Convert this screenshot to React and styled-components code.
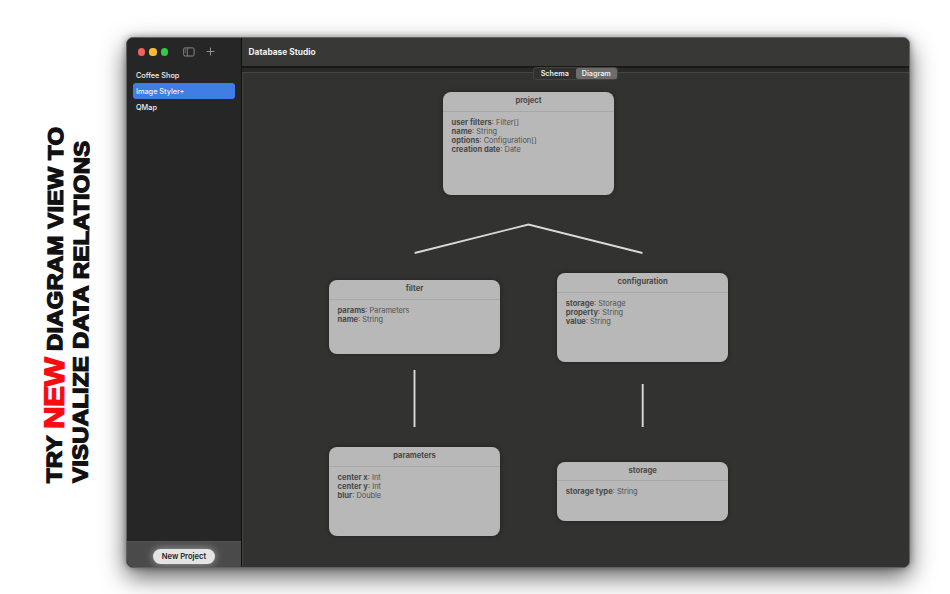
import React from "react";
import styled, { createGlobalStyle } from "styled-components";

const Global = createGlobalStyle`
  * { box-sizing: border-box; }
  body { margin: 0; background: #fff; overflow: hidden; }
`;

const Page = styled.main`
  display: flex;
  width: 950px;
  height: 594px;
  background: #fff;
  font-family: Inter, "Liberation Sans", sans-serif;
`;

const Banner = styled.div`
  flex: none;
  width: 126px;
  height: 483px;
  padding-left: 43.7px;
  display: flex;
  color: #111;
`;

const Slogan = styled.h1`
  flex: none;
  margin: 0;
  width: 52px;
  height: 483px;
  display: flex;
  flex-direction: row-reverse;
  transform-origin: 50% 100%;
  transform: translateY(-541px) rotate(180.27deg) scaleY(1.12);
`;

const Line = styled.div`
  flex: none;
  writing-mode: vertical-rl;
  width: 26px;
  height: 483px;
  line-height: 26px;
  font-family: "Liberation Sans", Arial, sans-serif;
  font-size: 21.3px;
  font-weight: 700;
  white-space: pre;
  -webkit-text-stroke: 1.3px currentColor;
  letter-spacing: ${(p) => p.$spacing}px;
`;

const Highlight = styled.span`
  color: #f50d12;
  font-size: 28px;
  line-height: 26px;
  letter-spacing: -0.6px;
`;

const Window = styled.section`
  flex: none;
  display: flex;
  width: 784px;
  height: 531px;
  margin-top: 37px;
  border: 1px solid #62625f;
  border-radius: 7px;
  overflow: hidden;
  background: #323230;
  box-shadow: 0 9px 24px rgba(0, 0, 0, 0.62), 0 0 6px rgba(0, 0, 0, 0.35);
`;

const Sidebar = styled.aside`
  flex: none;
  display: flex;
  flex-direction: column;
  width: 115px;
  background: #262626;
  border-right: 1px solid #111;
`;

const WindowControls = styled.header`
  display: flex;
  align-items: center;
  height: 28px;
  padding: 0 0 0 11px;
  gap: 4.3px;
`;

const Light = styled.span`
  width: 7.2px;
  height: 7.2px;
  border-radius: 50%;
  background: ${(p) => p.$color};
`;

const ToolIcon = styled.svg`
  display: block;
  fill: none;
  stroke: #929292;
  margin-top: -1px;
  margin-left: ${(p) => p.$gap}px;
`;

const ProjectList = styled.nav`
  flex: 1;
  padding: 1px 6px 0 6px;
`;

const ProjectItem = styled.div`
  height: 16px;
  padding: 1px 0 0 3px;
  border-radius: 3px;
  background: ${(p) => (p.$selected ? "#3f7ee3" : "transparent")};
  color: #f0f0f0;
  font-size: 7.3px;
  font-weight: 500;
  line-height: 16px;
`;

const SidebarFooter = styled.footer`
  display: flex;
  justify-content: center;
  height: 26px;
  padding-top: 7px;
  background: #4a4a4a;
  border-top: 1px solid #505050;
`;

const NewButton = styled.button`
  width: 62px;
  height: 15px;
  padding: 0;
  border: 0;
  border-radius: 8px;
  background: #e4e4e4;
  box-shadow: 0 0 8px rgba(255, 255, 255, 0.5);
  color: #222;
  font: 600 7.6px/16px Inter, sans-serif;
`;

const Content = styled.div`
  flex: 1;
  display: flex;
  flex-direction: column;
`;

const TitleBar = styled.header`
  height: 30px;
  padding-left: 6.5px;
  background: #383837;
  border-bottom: 2px solid #181817;
  color: #f0f0f0;
  font-size: 8.4px;
  font-weight: 700;
  line-height: 28px;
`;

const TabStrip = styled.div`
  display: flex;
  justify-content: center;
  height: 4px;
  background: #292928;
`;

const Tabs = styled.div`
  z-index: 1;
  display: flex;
  width: 85px;
  height: 13px;
  margin-top: -1px;
  border: 1px solid #42423f;
  border-radius: 3px;
  background: #30302f;
`;

const Tab = styled.button`
  width: 42px;
  height: 11px;
  padding: 0;
  border: 0;
  border-radius: 2.5px;
  background: ${(p) => (p.$active ? "#6c6c6b" : "transparent")};
  color: #eee;
  font: 600 7.2px/10px Inter, sans-serif;
`;

const Canvas = styled.div`
  position: relative;
  flex: 1;
  border-top: 1px solid #454543;
  border-left: 1px solid #42423f;
  background: #323230;
`;

const Links = styled.svg`
  position: absolute;
  left: 0;
  top: 0;
  fill: none;
  stroke: #d9d9d6;
  stroke-width: 1.9;
`;

const Entity = styled.article`
  position: absolute;
  left: ${(p) => p.$x}px;
  top: ${(p) => p.$y}px;
  width: 171px;
  height: ${(p) => p.$h}px;
  border-radius: 8px;
  background: #b8b8b8;
  box-shadow: 0 0 5px rgba(0, 0, 0, 0.35);
  color: #505050;
  font-size: 7.4px;
`;

const EntityName = styled.h2`
  height: 19.5px;
  margin: 0;
  padding-top: 1px;
  border-bottom: 1px solid #a7a7a7;
  color: #484848;
  font-size: 7.6px;
  font-weight: 700;
  line-height: 16px;
  text-align: center;
`;

const Fields = styled.div`
  padding: 6px 8.5px;

  b { font-size: 7.6px; color: #484848; }
`;

const Field = styled.div`
  height: 9.2px;
  line-height: 9.2px;
`;

const entities = [
  { name: "project", x: 200, y: 19, h: 102.7, fields: [["user filters", "Filter[]"], ["name", "String"], ["options", "Configuration[]"], ["creation date", "Date"]] },
  { name: "filter", x: 86, y: 207.2, h: 74, fields: [["params", "Parameters"], ["name", "String"]] },
  { name: "configuration", x: 314.2, y: 200.3, h: 88.3, fields: [["storage", "Storage"], ["property", "String"], ["value", "String"]] },
  { name: "parameters", x: 86, y: 374.4, h: 88.3, fields: [["center x", "Int"], ["center y", "Int"], ["blur", "Double"]] },
  { name: "storage", x: 314.2, y: 388.6, h: 59.8, fields: [["storage type", "String"]] },
];

export default function App() {
  return (
    <>
      <Global />
      <Page>
        <Banner>
          <Slogan>
            <Line $spacing={0.2}>TRY <Highlight>NEW</Highlight> DIAGRAM VIEW TO</Line>
            <Line $spacing={0.25}>VISUALIZE DATA RELATIONS</Line>
          </Slogan>
        </Banner>
        <Window>
          <Sidebar>
            <WindowControls>
              <Light $color="#f4605a" />
              <Light $color="#f8bd34" />
              <Light $color="#31c949" />
              <ToolIcon $gap={10.6} width="12" height="10" viewBox="0 0 12 10">
                <rect x="0.7" y="0.9" width="10.4" height="8.1" rx="1.3" strokeWidth="0.9" />
                <path d="M4.3 1v8" strokeWidth="0.8" />
                <path d="M1.9 2.7h1.2M1.9 4h1.2M1.9 5.3h1.2" strokeWidth="0.6" />
              </ToolIcon>
              <ToolIcon $gap={7} width="9" height="9" viewBox="0 0 9 9">
                <path d="M4.5 0.6v7.8M0.6 4.5h7.8" strokeWidth="1" />
              </ToolIcon>
            </WindowControls>
            <ProjectList>
              <ProjectItem>Coffee Shop</ProjectItem>
              <ProjectItem $selected>Image Styler+</ProjectItem>
              <ProjectItem>QMap</ProjectItem>
            </ProjectList>
            <SidebarFooter>
              <NewButton>New Project</NewButton>
            </SidebarFooter>
          </Sidebar>
          <Content>
            <TitleBar>Database Studio</TitleBar>
            <TabStrip>
              <Tabs>
                <Tab>Schema</Tab>
                <Tab $active>Diagram</Tab>
              </Tabs>
            </TabStrip>
            <Canvas>
              <Links width="660" height="494">
                <path d="M171.7 180 285.5 151.5 399.5 180M171.5 297v57M399.7 311v43" />
              </Links>
              {entities.map((e) => (
                <Entity key={e.name} $x={e.x} $y={e.y} $h={e.h}>
                  <EntityName>{e.name}</EntityName>
                  <Fields>
                    {e.fields.map(([key, type]) => (
                      <Field key={key}><b>{key}</b>: {type}</Field>
                    ))}
                  </Fields>
                </Entity>
              ))}
            </Canvas>
          </Content>
        </Window>
      </Page>
    </>
  );
}
